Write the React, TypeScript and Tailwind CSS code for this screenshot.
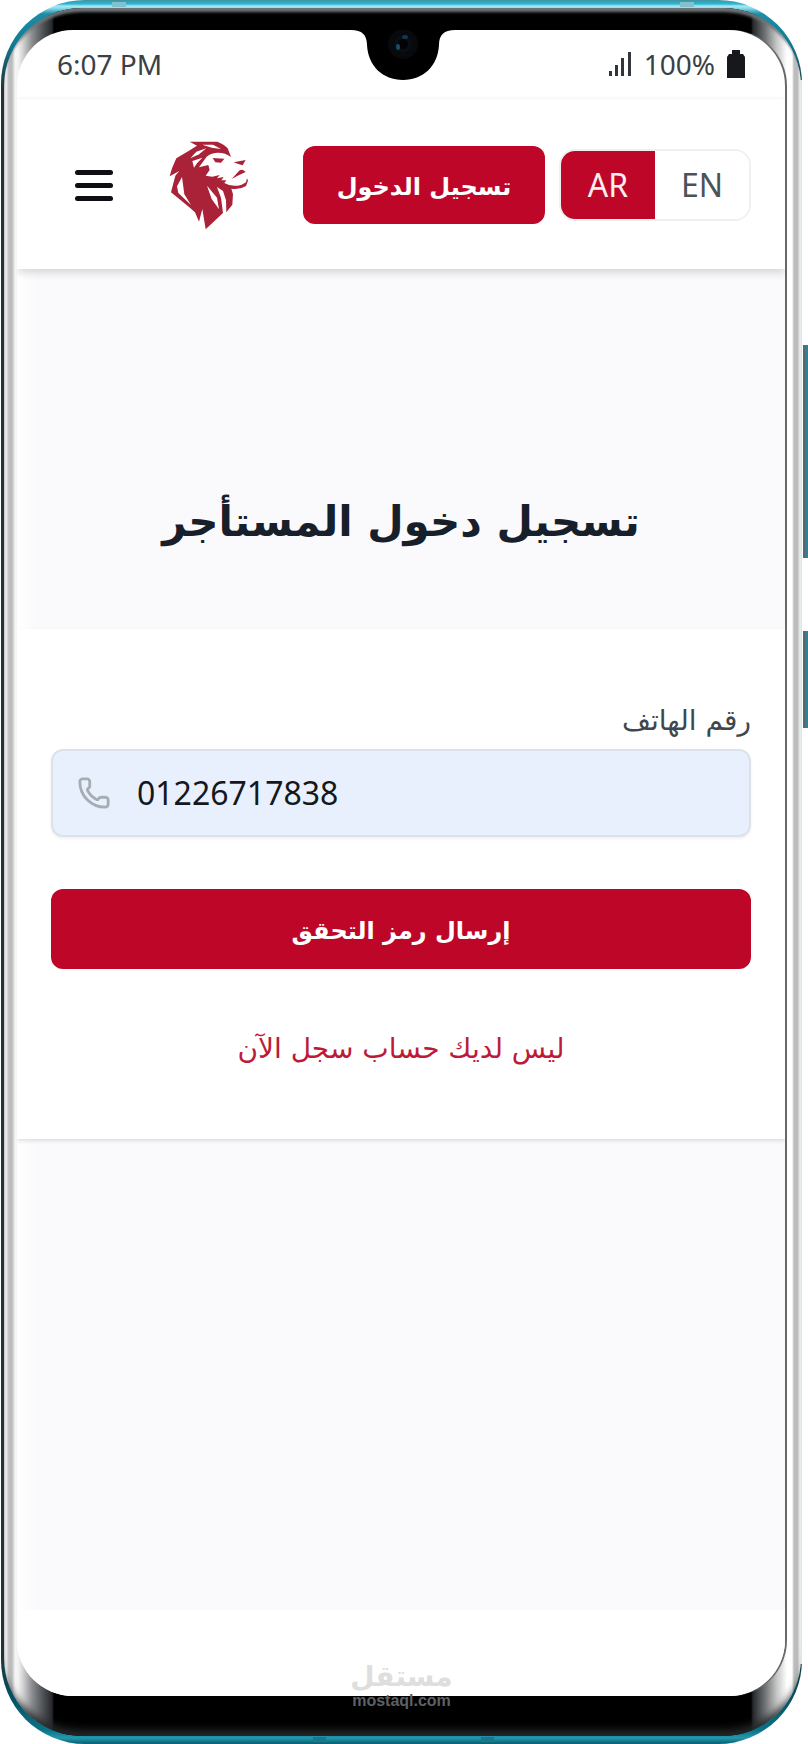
import { useState } from 'react';
import { Phone } from 'lucide-react';

function LionLogo() {
    return (
        <svg viewBox="54 40 252 276" className="h-[92px] w-[84px]" role="img" aria-label="Lion">
            <path
                fill="#a92238"
                d="M122 48 L205 48 Q226 56 236 68 L246 94 Q228 80 204 81 Q184 83 173 93 L150 125 L178 118 L182 133 L170 150 L190 153 L212 148 L204 158 L224 154 L217 164 L232 164 L226 172 Q250 186 278 177 L291 170 L294 158 L297 165 L291 181 Q272 193 247 189 L252 206 L250 237 L232 260 L231 224 L222 196 L204 184 L216 216 L222 262 L170 311 L160 250 L150 288 L138 260 L120 244 L66 200 L79 150 L91 136 L62 152 L69 128 L82 98 L120 75 L144 60 Z"
            />
            <g fill="#fff">
                <path d="M99 154 L84 182 L88 202 L126 238 L106 206 Z" />
                <path d="M174 180 L204 216 L210 251 L188 220 Z" />
                <path d="M124 98 L142 78 L172 68 L150 86 Z" />
                <path d="M130 106 L160 96 L144 113 L135 126 Z" />
                <path d="M160 57 L192 57 L216 70 L188 66 Z" />
            </g>
            <g fill="#a92238">
                <path d="M191 97 L226 99 L216 111 L199 110 Z" />
                <path d="M254 110 L290 103 L281 119 L268 115 Z" />
                <path d="M248 160 L272 134 L281 132 L290 139 L266 150 Z" />
            </g>
        </svg>
    );
}

function SignalIcon() {
    return (
        <svg viewBox="0 0 24 26" className="h-[26px] w-6" fill="#30363b" aria-hidden="true">
            <rect x="1" y="20" width="3" height="5" />
            <rect x="7" y="14" width="3" height="11" />
            <rect x="13" y="7" width="3" height="18" />
            <rect x="20" y="1" width="3" height="24" />
        </svg>
    );
}

function BatteryIcon() {
    return (
        <svg viewBox="0 0 18 28" className="h-7 w-[18px]" fill="#16181b" aria-hidden="true">
            <path d="M5 0 H13 V4 H16 L18 7 V28 H0 V7 L2 4 H5 Z" />
        </svg>
    );
}

function Notch() {
    return (
        <svg viewBox="0 0 108 52" className="absolute left-1/2 -top-px h-[52px] w-[108px] -translate-x-1/2" aria-hidden="true">
            <path d="M4 0 V1 C15 1 20 6 20 16 C21 37 36 51 56 51 C76 51 91 37 92 16 C92 6 97 1 108 1 V0 Z" fill="#000" />
            <circle cx="56" cy="15" r="15" fill="#07090c" />
            <circle cx="56" cy="15" r="9" fill="#0a0d13" />
            <circle cx="56" cy="15" r="5" fill="#020304" />
            <ellipse cx="58" cy="8" rx="3" ry="2" fill="#103a4b" />
            <ellipse cx="51" cy="18" rx="2" ry="3" fill="#145067" />
        </svg>
    );
}

function StatusBar() {
    return (
        <div className="flex h-[69px] items-center justify-between border-b border-[#fafafa] pr-10 pl-10 text-[28px] leading-8 text-[#3a4045]">
            <span>6:07 PM</span>
            <div className="flex items-center gap-3">
                <SignalIcon />
                <span>100%</span>
                <BatteryIcon />
            </div>
        </div>
    );
}

function Header() {
    const [lang, setLang] = useState('AR');

    return (
        <header className="relative z-10 flex h-[170px] items-center bg-white px-[34px] pt-[2px] shadow-[0_4px_8px_rgba(0,0,0,0.14)]">
            <button className="ml-6 flex w-[38px] flex-col gap-2" aria-label="Menu">
                <span className="h-[5px] w-full rounded-full bg-[#0d0f12]" />
                <span className="h-[5px] w-full rounded-full bg-[#0d0f12]" />
                <span className="h-[5px] w-full rounded-full bg-[#0d0f12]" />
            </button>
            <a href="#" className="ml-[54px]">
                <LionLogo />
            </a>
            <div className="ml-auto flex items-center gap-[14px]">
                <button
                    lang="ar"
                    dir="rtl"
                    className="h-[78px] w-[242px] rounded-xl bg-[#be0728] pt-1 font-['DejaVu_Sans',sans-serif] text-2xl font-bold text-white"
                >
                    تسجيل الدخول
                </button>
                <div className="flex h-[72px] w-[192px] overflow-hidden rounded-2xl border-2 border-[#f0f0f1] text-[32px]">
                    <button
                        onClick={() => setLang('AR')}
                        aria-pressed={lang === 'AR'}
                        className="flex-1 bg-[#be0728] text-[#fdeef0]"
                    >
                        AR
                    </button>
                    <button
                        onClick={() => setLang('EN')}
                        aria-pressed={lang === 'EN'}
                        className="flex-1 bg-white text-[#4b5358]"
                    >
                        EN
                    </button>
                </div>
            </div>
        </header>
    );
}

function LoginForm() {
    const [phone, setPhone] = useState('01226717838');

    return (
        <form
            lang="ar"
            className="relative flex flex-col bg-white px-[34px] pt-[72px] pb-[70px] font-['DejaVu_Sans',sans-serif] shadow-[0_2px_4px_rgba(0,0,0,0.12)]"
            onSubmit={(e) => e.preventDefault()}
        >
            <label htmlFor="phone" dir="rtl" className="text-[28px] leading-10 text-[#3f474d]">
                رقم الهاتف
            </label>
            <div className="mt-2 flex h-[88px] items-center gap-[26px] rounded-xl border-2 border-[#dde2ea] bg-[#e8f0fe] px-6 shadow-[0_2px_3px_rgba(0,0,0,0.06)]">
                <Phone size={34} strokeWidth={2} className="shrink-0 text-[#a5adb3]" />
                <input
                    id="phone"
                    type="tel"
                    dir="ltr"
                    value={phone}
                    onChange={(e) => setPhone(e.target.value)}
                    className="min-w-0 flex-1 bg-transparent font-['Noto_Sans',sans-serif] text-[32px] text-[#15181b] outline-none"
                />
            </div>
            <button type="submit" dir="rtl" className="mt-[52px] h-20 rounded-xl bg-[#be0728] pt-1 text-2xl font-bold text-white">
                إرسال رمز التحقق
            </button>
            <a href="#" dir="rtl" className="mt-[60px] self-center text-[28px] leading-10 text-[#be1a38]">
                ليس لديك حساب سجل الآن
            </a>
        </form>
    );
}

function Watermark() {
    return (
        <div className="pointer-events-none absolute bottom-[35px] left-1/2 flex -translate-x-1/2 flex-col items-center">
            <span lang="ar" dir="rtl" className="font-['DejaVu_Sans',sans-serif] text-[28px] leading-8 font-bold text-[#dedede]">
                مستقل
            </span>
            <span className="font-['Liberation_Sans',sans-serif] text-base leading-4 font-bold text-[#5c6166]">mostaql.com</span>
        </div>
    );
}

export default function App() {
    return (
        <div className="relative bg-white pr-[6px] pl-px font-['Noto_Sans',sans-serif]">
            {/* side keys */}
            <span className="absolute top-[345px] right-0 h-[213px] w-[5px] border-l-2 border-[#5d6668] bg-[#2c8195]" />
            <span className="absolute top-[631px] right-0 h-[97px] w-[5px] border-l-2 border-[#5d6668] bg-[#2c8195]" />

            <div className="relative flex min-h-screen flex-col rounded-[84px] pt-[8px] pr-px pb-[8px] pl-[3px] [background:linear-gradient(#dde6e6,#dde6e6)_right_center/2px_calc(100%-160px)_no-repeat,linear-gradient(#4a8f9b_0,#28aac5_2px,#35b4cd_4px,#a5eaf5_6px,#8fdcea_8px,#1b8da5_14px,#107b93_44px,#1f3338_90px,#1f3338_calc(100%-90px),#044d5f_calc(100%-50px),#0a7288_calc(100%-14px),#2398ae_calc(100%-6px),#0b6478_calc(100%-1px))]">
                <span className="absolute top-[2px] left-[111px] h-[5px] w-[14px] bg-[#7fc3cf]" />
                <span className="absolute top-[2px] right-[108px] h-[5px] w-[14px] bg-[#7fc3cf]" />
                <span className="absolute bottom-[2px] left-[312px] h-[5px] w-[13px] bg-[#1b7789]" />
                <span className="absolute right-[308px] bottom-[2px] h-[5px] w-[13px] bg-[#1b7789]" />

                <div className="flex flex-1 flex-col rounded-[78px] pt-[22px] pr-[16px] pb-[40px] pl-[13px] shadow-[inset_0_8px_3px_-4px_#6f7375,inset_0_-14px_8px_-8px_#26282a] [background:linear-gradient(90deg,#c4c4c4_0,#f0f0f0_2px,#bcbcbc_5px,#bcbcbc_8px,#f4f4f4_11px,#f4f4f4_14px,#d2d2d2_19px,#8b8d90_28px,#55585b_38px,#26282b_48px,#000_50px,#000_calc(100%-50px),#26282b_calc(100%-48px),#6f7275_calc(100%-36px),#c8c8c8_calc(100%-24px),#fff_calc(100%-14px),#fff_calc(100%-9px),#bcbcbc_calc(100%-7px),#bcbcbc_calc(100%-3px),#dfe6e6_calc(100%-2px),#eef2f2_100%)]">
                    <div className="relative flex flex-1 flex-col overflow-hidden rounded-[56px] bg-white shadow-[2px_0_0_#66686a]">
                        <StatusBar />
                        <Header />
                        <main className="flex flex-1 flex-col bg-linear-to-r from-white via-[#fafafc] via-[20px] to-[#fafafc]">
                            <h1
                                lang="ar"
                                dir="rtl"
                                className="pt-[225px] pb-[79px] text-center font-['DejaVu_Sans',sans-serif] text-[42px] leading-14 font-bold text-[#17202a]"
                            >
                                تسجيل دخول المستأجر
                            </h1>
                            <LoginForm />
                        </main>
                        <footer className="h-[86px] bg-white" />
                        <Notch />
                    </div>
                </div>
                <Watermark />
            </div>
        </div>
    );
}
